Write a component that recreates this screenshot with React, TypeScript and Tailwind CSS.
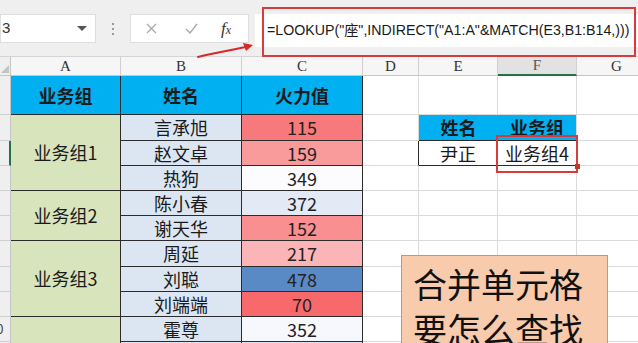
import React from 'react';

type DataRow = {
  n: number;
  name: string;
  value: string;
  fill: string;
  group?: { label: string; span: string };
};

const data: DataRow[] = [
  { n: 2, name: '言承旭', value: '115', fill: 'bg-[#f8797b]', group: { label: '业务组1', span: 'row-span-3' } },
  { n: 3, name: '赵文卓', value: '159', fill: 'bg-[#f99a9b]' },
  { n: 4, name: '热狗', value: '349', fill: 'bg-[#fcfcff]' },
  { n: 5, name: '陈小春', value: '372', fill: 'bg-[#e4eaf5]', group: { label: '业务组2', span: 'row-span-2' } },
  { n: 6, name: '谢天华', value: '152', fill: 'bg-[#f98f90]' },
  { n: 7, name: '周延', value: '217', fill: 'bg-[#fbb5b6]', group: { label: '业务组3', span: 'row-span-3' } },
  { n: 8, name: '刘聪', value: '478', fill: 'bg-[#5a8ac6]' },
  { n: 9, name: '刘端端', value: '70', fill: 'bg-[#f8696b]' },
  { n: 10, name: '霍尊', value: '352', fill: 'bg-[#f7f8fd]', group: { label: '', span: 'row-span-2' } },
  { n: 11, name: '', value: '', fill: 'bg-[#dce6f2]' },
];

const letters = ['A', 'B', 'C', 'D', 'E', 'F', 'G'];

function RowHead({ n }: { n: number }) {
  return (
    <div
      className={`overflow-hidden border-b border-[#d0d0d0] bg-[#efefef] ${
        n === 3 ? 'border-r-2 border-r-[#217346]' : 'border-r border-r-[#c6c6c6]'
      }`}
    >
      {n === 10 && <span className="-ml-[11px] block text-[13px] leading-[24px] text-[#444]">10</span>}
    </div>
  );
}

function Empty() {
  return <div className="border-b border-r border-[#dadada]" />;
}

function SideCells({ n }: { n: number }) {
  if (n === 2) {
    return (
      <>
        <Empty />
        <div className="flex items-center justify-center border-b border-b-[#2b2b2b] bg-[#00b0f0] text-[18px] font-bold text-[#1a1a1a]">
          姓名
        </div>
        <div className="flex items-center justify-center border-b border-b-[#2b2b2b] border-r border-r-[#dadada] bg-[#00b0f0] text-[18px] font-bold text-[#1a1a1a]">
          业务组
        </div>
        <Empty />
      </>
    );
  }
  if (n === 3) {
    return (
      <>
        <div className="border-b border-b-[#dadada] border-r border-r-[#2b2b2b]" />
        <div className="flex items-center justify-center border-b border-r border-[#2b2b2b] text-[18px] text-[#1a1a1a]">
          尹正
        </div>
        <div className="flex items-center justify-center border-b border-b-[#2b2b2b] border-r border-r-[#dadada] text-[18px] text-[#1a1a1a]">
          业务组4
        </div>
        <Empty />
      </>
    );
  }
  return (
    <>
      <Empty />
      <Empty />
      <Empty />
      <Empty />
    </>
  );
}

export default function App() {
  return (
    <div className="relative h-[343px] w-[638px] overflow-hidden bg-white font-['Noto_Sans_CJK_SC',sans-serif]">
      {/* toolbar */}
      <div className="flex h-[57px] items-start border-b border-[#d4d4d4] bg-[#efefef] pt-[14px]">
        <div className="flex h-[29px] w-[96px] shrink-0 items-center justify-between border border-[#dedede] bg-white pl-[1px] pr-[8px]">
          <span className="font-['Liberation_Sans',sans-serif] text-[15px] text-[#333]">3</span>
          <span className="h-0 w-0 border-x-[5px] border-t-[5px] border-x-transparent border-t-[#555]" />
        </div>
        <div className="flex h-[29px] w-[34px] shrink-0 flex-col items-center justify-center gap-[3px]">
          <span className="h-[2px] w-[2px] bg-[#999]" />
          <span className="h-[2px] w-[2px] bg-[#999]" />
          <span className="h-[2px] w-[2px] bg-[#999]" />
        </div>
        <div className="flex h-[29px] w-[119px] shrink-0 items-center border border-[#dedede] bg-white">
          <svg className="ml-[15px]" width="11" height="11" viewBox="0 0 11 11">
            <path d="M1 1L10 10M10 1L1 10" stroke="#aaa" strokeWidth="1.3" />
          </svg>
          <svg className="ml-[28px]" width="13" height="11" viewBox="0 0 13 11">
            <path d="M1 6L5 10L12 1" stroke="#aaa" strokeWidth="1.4" fill="none" />
          </svg>
          <span className="ml-[23px] font-['Liberation_Serif',serif] text-[17px] italic text-[#333]">
            f<span className="text-[12px]">x</span>
          </span>
        </div>
        <div className="ml-[6px] flex h-[33px] min-w-0 flex-1 items-center overflow-hidden bg-white pl-[12px]">
          <span className="whitespace-nowrap font-['Liberation_Sans','Noto_Sans_CJK_SC',sans-serif] text-[14.2px] text-[#1a1a1a]">
            =LOOKUP("座",INDIRECT("A1:A"&MATCH(E3,B1:B14,)))
          </span>
        </div>
      </div>

      {/* sheet */}
      <div className="grid grid-cols-[11px_110px_121px_121px_56px_79px_79px_80px] grid-rows-[19px_39px_26px_25px_25px_25px_25px_26px_25px_25px_25px_25px]">
        <div className="relative border-b border-r border-[#c6c6c6] bg-[#efefef]">
          <svg className="absolute bottom-[2px] right-[1px]" width="8" height="8" viewBox="0 0 8 8">
            <path d="M8 0V8H0Z" fill="#c4c4c4" />
          </svg>
        </div>
        {letters.map((l) => (
          <div
            key={l}
            className={`flex items-center justify-center border-r border-[#d0d0d0] font-['Liberation_Serif',serif] text-[15px] ${
              l === 'F'
                ? 'border-b-2 border-b-[#217346] bg-[#e2e2e2] text-[#555]'
                : 'border-b border-b-[#c6c6c6] bg-[#f6f6f6] text-[#333]'
            }`}
          >
            {l}
          </div>
        ))}

        {/* row 1 */}
        <RowHead n={1} />
        {['业务组', '姓名', '火力值'].map((h) => (
          <div
            key={h}
            className="flex items-center justify-center border-b border-r border-[#2b2b2b] bg-[#00b0f0] text-[18px] font-bold text-[#1a1a1a]"
          >
            {h}
          </div>
        ))}
        <Empty />
        <Empty />
        <Empty />
        <Empty />

        {data.map((r) => (
          <React.Fragment key={r.n}>
            <RowHead n={r.n} />
            {r.group && (
              <div
                className={`${r.group.span} flex items-center justify-center border-b border-r border-[#2b2b2b] bg-[#d8e4bc] text-[18px] text-[#1a1a1a]`}
              >
                {r.group.label}
              </div>
            )}
            <div className="flex items-center justify-center border-b border-r border-[#2b2b2b] bg-[#dce6f2] text-[18px] text-[#1a1a1a]">
              {r.name}
            </div>
            <div
              className={`flex items-center justify-center border-b border-r border-[#2b2b2b] ${r.fill} text-[18px] text-[#222]`}
            >
              {r.value}
            </div>
            <SideCells n={r.n} />
          </React.Fragment>
        ))}
      </div>

      {/* annotations */}
      <div className="absolute left-[262px] top-[7px] h-[50px] w-[374px] border-2 border-[#d83b3b]" />
      <svg className="absolute left-[194px] top-[40px]" width="64" height="22" viewBox="0 0 64 22">
        <path d="M4 17C20 13 38 10 52 7" stroke="#d42a2a" strokeWidth="2" fill="none" strokeLinecap="round" />
        <path d="M59 5L49 3L52 11Z" fill="#d42a2a" />
      </svg>
      <div className="absolute left-[496px] top-[135px] h-[38px] w-[82px] border-2 border-[#d83b3b]" />
      <div className="absolute left-[575px] top-[164px] h-[5px] w-[5px] bg-[#c0392b]" />

      <div className="absolute left-[401px] top-[255px] h-[100px] w-[207px] border border-[#a0a0a0] bg-[#f8cbad] pl-[11px] pt-[5px] text-[34px] leading-[45px] text-[#111]">
        合并单元格
        <br />
        要怎么查找
      </div>
    </div>
  );
}
